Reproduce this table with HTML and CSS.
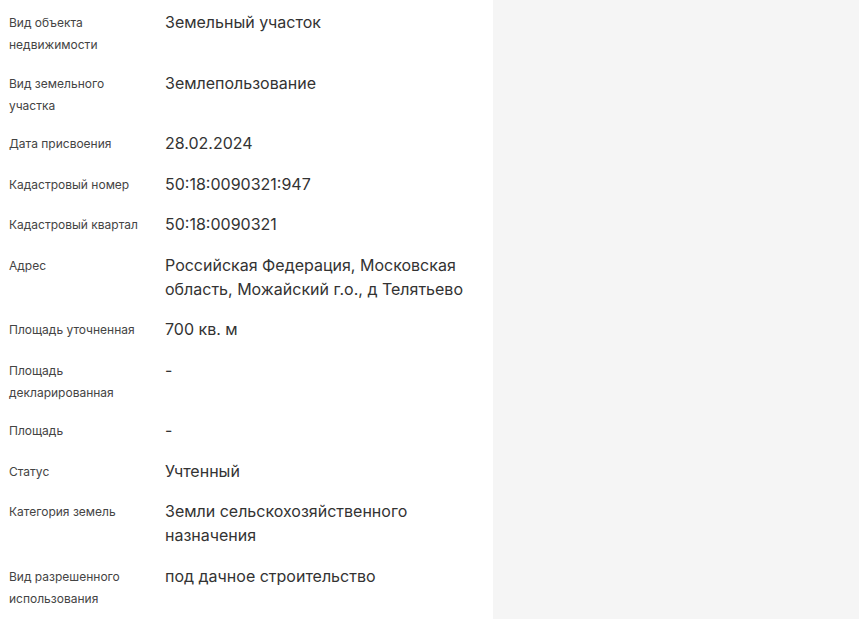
FILE: index.html
```html
<!DOCTYPE html>
<html lang="ru">
<head>
    <meta charset="UTF-8">
    <meta name="viewport" content="width=device-width, initial-scale=1.0">
    <title>Земельный участок</title>
    <link rel="stylesheet" href="styles.css">
</head>
<body>
    <div class="panel">
        <dl class="props">
            <div class="prop">
                <dt>Вид объекта недвижимости</dt>
                <dd>Земельный участок</dd>
            </div>
            <div class="prop">
                <dt>Вид земельного участка</dt>
                <dd>Землепользование</dd>
            </div>
            <div class="prop">
                <dt>Дата присвоения</dt>
                <dd>28.02.2024</dd>
            </div>
            <div class="prop">
                <dt>Кадастровый номер</dt>
                <dd>50:18:0090321:947</dd>
            </div>
            <div class="prop">
                <dt>Кадастровый квартал</dt>
                <dd>50:18:0090321</dd>
            </div>
            <div class="prop">
                <dt>Адрес</dt>
                <dd>Российская Федерация, Московская область, Можайский г.о., д Телятьево</dd>
            </div>
            <div class="prop">
                <dt>Площадь уточненная</dt>
                <dd>700 кв. м</dd>
            </div>
            <div class="prop">
                <dt>Площадь декларированная</dt>
                <dd>-</dd>
            </div>
            <div class="prop">
                <dt>Площадь</dt>
                <dd>-</dd>
            </div>
            <div class="prop">
                <dt>Статус</dt>
                <dd>Учтенный</dd>
            </div>
            <div class="prop">
                <dt>Категория земель</dt>
                <dd>Земли сельскохозяйственного назначения</dd>
            </div>
            <div class="prop">
                <dt>Вид разрешенного использования</dt>
                <dd>под дачное строительство</dd>
            </div>
        </dl>
    </div>
</body>
</html>
```

FILE: styles.css
```css
body {
    font-family: Inter, "Noto Sans", Arial, sans-serif;
    margin: 0;
    padding: 0;
    background-color: #f5f5f5;
    color: #333;
}
.panel {
    width: 493px;
    min-height: 100vh;
    background: white;
    box-sizing: border-box;
    padding: 10px 13px 0 9px;
}
.props {
    margin: 0;
    display: flex;
    flex-direction: column;
    gap: 16.5px;
}
.prop {
    display: grid;
    grid-template-columns: 156px 1fr;
    align-items: start;
}
.prop dt {
    margin: 2px 0 -2px;
    padding-right: 13px;
    font-size: 12px;
    line-height: 22px;
    color: #444;
}
.prop dd {
    margin: 0;
    font-size: 16px;
    line-height: 24px;
    color: #333;
}
```
